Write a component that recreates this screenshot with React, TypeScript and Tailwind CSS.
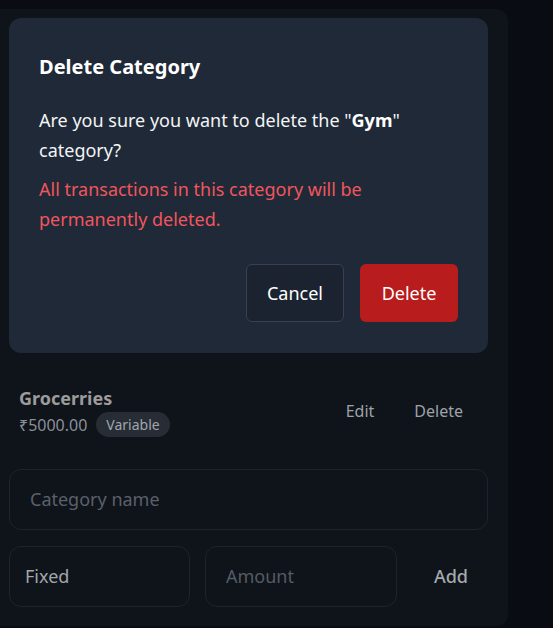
import React from 'react'

const font = { fontFamily: '"Noto Sans", "Open Sans", sans-serif' }

const DeleteModal = () => {
  return (
    <div className="rounded-[12px] bg-[#1f2937] px-[30px] pt-[35px] pb-[31px]">
      <p className="text-[20px] leading-[28px] font-bold text-white">Delete Category</p>
      <p className="mt-6 text-[18px] leading-[30px] text-[#f3f4f6]">
        Are you sure you want to delete the "<span className="font-bold text-white">Gym</span>" category?
      </p>
      <p className="mt-[9px] text-[18px] leading-[30px] text-[#f0565e]">
        All transactions in this category will be permanently deleted.
      </p>
      <div className="mt-[30px] flex justify-end gap-4">
        <button className="h-[58px] w-[98px] rounded-[6px] border border-[#374151] bg-[#1b2331] text-[18px] text-white">
          Cancel
        </button>
        <button className="h-[58px] w-[98px] rounded-[6px] bg-[#b91c1c] text-[18px] text-white">
          Delete
        </button>
      </div>
    </div>
  )
}

const CategoryRow = () => {
  return (
    <div className="flex items-center pl-[10px] pr-[25px]">
      <div>
        <p className="text-[18px] leading-[26px] font-bold text-[#9c9c9c]">Grocerries</p>
        <div className="mt-[1px] flex items-center gap-[9px]">
          <p className="text-[16px] text-[#8a8f98]">₹5000.00</p>
          <span className="rounded-full bg-[#272c35] px-[10px] py-[2px] text-[14px] text-[#a0a6b0]">Variable</span>
        </div>
      </div>
      <div className="ml-auto flex items-center gap-10 text-[16px] text-[#9ea2a8]">
        <button>Edit</button>
        <button>Delete</button>
      </div>
    </div>
  )
}

export default function App() {
  return (
    <div className="min-h-[628px] w-[553px] bg-[#090c13] pt-[9px]" style={font}>
      <div className="h-[617px] w-[508px] rounded-r-[12px] bg-[#0f131a] pl-[9px] pr-[20px] pt-[9px]">
        <DeleteModal />
        <div className="mt-[32px]">
          <CategoryRow />
        </div>
        <div className="mt-[32px] flex h-[61px] items-center rounded-[12px] border border-[#1e232c] px-5">
          <input
            className="w-full bg-transparent text-[18px] text-[#a3a6ab] outline-none placeholder:text-[#5b606a]"
            placeholder="Category name"
          />
        </div>
        <div className="mt-4 flex items-center">
          <div className="flex h-[61px] w-[181px] items-center rounded-[12px] border border-[#1e232c] px-[15px] text-[18px] text-[#a3a6ab]">
            Fixed
          </div>
          <div className="ml-[15px] flex h-[61px] w-[192px] items-center rounded-[12px] border border-[#1e232c] px-5">
            <input
              className="w-full bg-transparent text-[18px] text-[#a3a6ab] outline-none placeholder:text-[#555b65]"
              placeholder="Amount"
            />
          </div>
          <button className="ml-auto mr-[20px] text-[18px] font-medium text-[#a5a8ad]">Add</button>
        </div>
      </div>
    </div>
  )
}
